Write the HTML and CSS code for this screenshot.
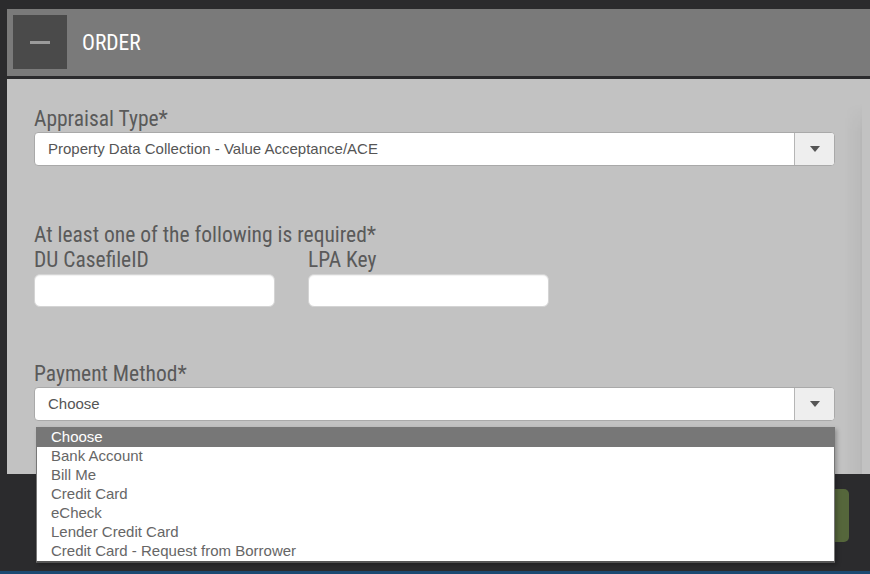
FILE: index.html
```html
<!DOCTYPE html>
<html>
<head>
<meta charset="utf-8">
<link rel="stylesheet" href="styles.css">
</head>
<body>
<div class="page">
  <div class="header">
    <div class="toggle"><span class="minus"></span></div>
    <div class="title">ORDER</div>
  </div>
  <div class="panel">
    <div class="field first">
      <div class="label">Appraisal Type*</div>
      <div class="select">
        <div class="select-text">Property Data Collection - Value Acceptance/ACE</div>
        <div class="select-btn"><span class="caret"></span></div>
      </div>
    </div>
    <div class="field second">
      <div class="label">At least one of the following is required*</div>
      <div class="pair">
        <div class="sub">
          <div class="label">DU CasefileID</div>
          <div class="input"></div>
        </div>
        <div class="sub">
          <div class="label">LPA Key</div>
          <div class="input"></div>
        </div>
      </div>
    </div>
    <div class="field third">
      <div class="label">Payment Method*</div>
      <div class="select-wrap">
        <div class="select">
          <div class="select-text">Choose</div>
          <div class="select-btn"><span class="caret"></span></div>
        </div>
        <ul class="options">
          <li class="active">Choose</li>
          <li>Bank Account</li>
          <li>Bill Me</li>
          <li>Credit Card</li>
          <li>eCheck</li>
          <li>Lender Credit Card</li>
          <li>Credit Card - Request from Borrower</li>
        </ul>
      </div>
    </div>
    <div class="edge"></div>
  </div>
  <div class="footer">
    <div class="go"></div>
  </div>
  <div class="bottom-strip"></div>
</div>
</body>
</html>
```

FILE: styles.css
```css
* { box-sizing: border-box; }
html, body { margin: 0; padding: 0; }
body {
  background: #2b2b2d;
  width: 870px;
  height: 574px;
  overflow: hidden;
  font-family: "Liberation Sans", Arial, sans-serif;
}
.page {
  padding-top: 9px;
  padding-left: 7px;
  height: 574px;
  display: flex;
  flex-direction: column;
}
.header {
  height: 67px;
  background: #7a7a7a;
  display: flex;
  align-items: center;
  padding-left: 6px;
}
.toggle {
  width: 54px;
  height: 54px;
  background: #4a4a4a;
  display: flex;
  align-items: center;
  justify-content: center;
}
.minus {
  display: block;
  width: 20px;
  height: 3px;
  background: #9b9b9b;
}
.title {
  margin-left: 15px;
  color: #ffffff;
  font-family: "Roboto Condensed", Roboto, sans-serif;
  font-stretch: condensed;
  font-size: 21.5px;
}
.panel {
  margin-top: 3px;
  height: 396px;
  background: #c2c2c2;
  padding: 28px 35px 0 27px;
  position: relative;
}
.edge {
  position: absolute;
  right: 8px;
  top: 24px;
  bottom: 0;
  width: 18px;
  background: linear-gradient(to right, rgba(0,0,0,0), rgba(0,0,0,0.035) 85%, rgba(0,0,0,0.06));
  -webkit-mask-image: linear-gradient(to bottom, transparent, #000 30px);
  mask-image: linear-gradient(to bottom, transparent, #000 30px);
}
.label {
  font-family: "Roboto Condensed", Roboto, sans-serif;
  font-stretch: condensed;
  font-size: 21.5px;
  line-height: 24px;
  color: #5a5a5a;
}
.select {
  margin-top: 1px;
  height: 34px;
  background: #fff;
  border: 1px solid #a9a9a9;
  border-radius: 4px;
  display: flex;
  overflow: hidden;
  position: relative;
  z-index: 1;
}
.select-text {
  flex: 1;
  padding-left: 13px;
  line-height: 32px;
  font-size: 15px;
  color: #555;
}
.select-btn {
  width: 40px;
  background: #eeeeee;
  border-left: 1px solid #b5b5b5;
  display: flex;
  align-items: center;
  justify-content: center;
}
.caret {
  width: 0;
  height: 0;
  border-left: 5px solid transparent;
  border-right: 5px solid transparent;
  border-top: 6px solid #555;
  margin-top: 1px;
}
.second { margin-top: 57px; }
.pair {
  display: flex;
  gap: 33px;
}
.sub { width: 241px; }
.sub .label { margin-top: 1px; }
.input {
  margin-top: 2px;
  height: 33px;
  background: #fff;
  border: 1px solid #d4d4d4;
  border-radius: 6px;
  box-shadow: inset 0 1px 1px rgba(0,0,0,0.06);
}
.third { margin-top: 55px; }
.select-wrap { position: relative; }
.options {
  position: absolute;
  left: 2px;
  right: 0;
  top: 40px;
  margin: 0;
  padding: 0;
  list-style: none;
  background: #fff;
  border: 1px solid #777;
  border-bottom: 2px solid #555;
  box-shadow: 2px 2px 4px rgba(0,0,0,0.25);
  z-index: 5;
}
.options li {
  height: 19px;
  line-height: 18px;
  padding-left: 14px;
  font-size: 15px;
  color: #666;
}
.options li.active {
  background: #777;
  color: #fff;
}
.footer {
  height: 97px;
  display: flex;
  justify-content: flex-end;
  padding-top: 15px;
  padding-right: 21px;
}
.go {
  width: 120px;
  height: 53px;
  background: #55663b;
  border-radius: 5px;
}
.bottom-strip {
  margin-left: -7px;
  height: 3px;
  background: #1b4a72;
}
```
